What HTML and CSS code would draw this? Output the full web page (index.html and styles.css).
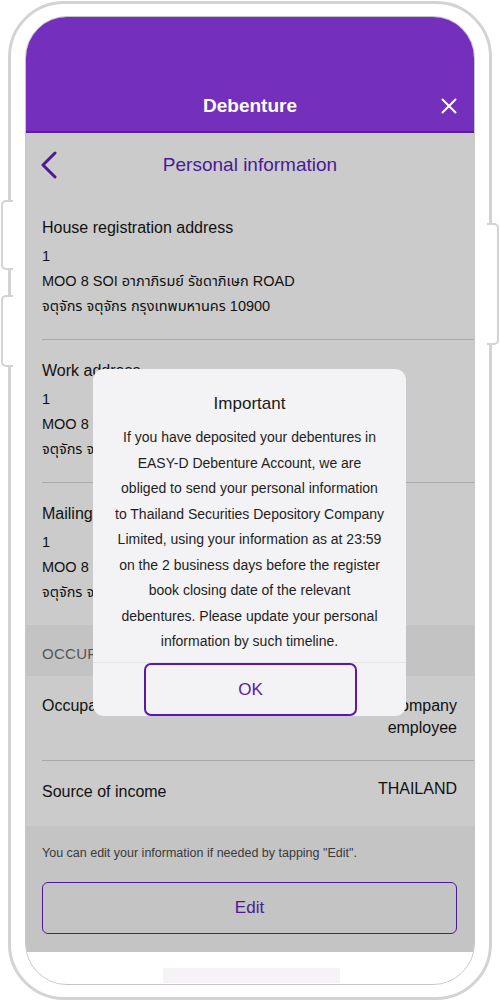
FILE: index.html
```html
<!DOCTYPE html>
<html lang="en">
<head>
<meta charset="utf-8">
<title>Debenture - Personal information</title>
<link rel="stylesheet" href="styles.css">
</head>
<body>
<div class="device">
  <span class="hw hw-left hw-l1"></span>
  <span class="hw hw-left hw-l2"></span>
  <span class="hw hw-right"></span>
  <div class="screen">
    <header class="appbar">
      <span class="appbar-title">Debenture</span>
      <svg class="close" width="16" height="16" viewBox="0 0 16 16"><path d="M1.5 1.5 L14.5 14.5 M14.5 1.5 L1.5 14.5" stroke="#fff" stroke-width="2" stroke-linecap="round"/></svg>
    </header>
    <div class="content">
      <div class="subbar">
        <svg class="back" width="18" height="28" viewBox="0 0 18 28"><path d="M15 2 L3 14 L15 26" fill="none" stroke="#4a1a98" stroke-width="3" stroke-linecap="round" stroke-linejoin="round"/></svg>
        <span class="subbar-title">Personal information</span>
      </div>

      <section class="addr">
        <div class="addr-title">House registration address</div>
        <div class="addr-line">1</div>
        <div class="addr-line">MOO 8 SOI อาภาภิรมย์ รัชดาภิเษก ROAD</div>
        <div class="addr-line">จตุจักร จตุจักร กรุงเทพมหานคร 10900</div>
      </section>
      <section class="addr">
        <div class="addr-title">Work address</div>
        <div class="addr-line">1</div>
        <div class="addr-line">MOO 8 SOI อาภาภิรมย์ รัชดาภิเษก ROAD</div>
        <div class="addr-line">จตุจักร จตุจักร กรุงเทพมหานคร 10900</div>
      </section>
      <section class="addr last">
        <div class="addr-title">Mailing address</div>
        <div class="addr-line">1</div>
        <div class="addr-line">MOO 8 SOI อาภาภิรมย์ รัชดาภิเษก ROAD</div>
        <div class="addr-line">จตุจักร จตุจักร กรุงเทพมหานคร 10900</div>
      </section>

      <div class="band">OCCUPATION</div>

      <div class="row">
        <span class="row-label">Occupation</span>
        <span class="row-value">Private company<br>employee</span>
      </div>
      <div class="row last src">
        <span class="row-label">Source of income</span>
        <span class="row-value">THAILAND</span>
      </div>

      <div class="footer">
        <p class="note">You can edit your information if needed by tapping "Edit".</p>
        <div class="btn-edit">Edit</div>
      </div>
      <div class="home-area"><span class="home-bar"></span></div>
    </div>

    <div class="dialog">
      <div class="dialog-title">Important</div>
      <p class="dialog-body">If you have deposited your debentures in<br>EASY-D Debenture Account, we are<br>obliged to send your personal information<br>to Thailand Securities Depository Company<br>Limited, using your information as at 23:59<br>on the 2 business days before the register<br>book closing date of the relevant<br>debentures. Please update your personal<br>information by such timeline.</p>
      <div class="dialog-actions">
        <div class="btn-ok">OK</div>
      </div>
    </div>
  </div>
</div>
</body>
</html>
```

FILE: styles.css
```css
* { box-sizing: border-box; }
html, body { margin: 0; padding: 0; background: #ffffff; }
body {
  width: 500px;
  height: 1004px;
  overflow: hidden;
  font-family: "Liberation Sans", Arial, "Noto Sans Thai", "Noto Sans", "DejaVu Sans", sans-serif;
  color: #111;
}

.device {
  position: relative;
  margin: 1px 8px 0;
  width: 484px;
  height: 999px;
  border: 3px solid #d3d3d3;
  border-radius: 56px;
  padding: 12px 14px;
  background: #fff;
}

.hw {
  position: absolute;
  background: #fff;
  border: 2px solid #d3d3d3;
  z-index: 2;
}
.hw-left { left: -10px; width: 12px; border-right: none; border-radius: 5px 0 0 5px; }
.hw-l1 { top: 196px; height: 70px; }
.hw-l2 { top: 291px; height: 72px; }
.hw-right { right: -10px; top: 219px; width: 12px; height: 122px; border-left: none; border-radius: 0 5px 5px 0; }

.screen {
  position: relative;
  width: 450px;
  height: 969px;
  border: 1px solid #c6c6c6;
  border-radius: 42px;
  overflow: hidden;
  display: flex;
  flex-direction: column;
  background: #fff;
}

.appbar {
  flex: 0 0 auto;
  height: 116px;
  background: #7430bc;
  border-bottom: 2px solid #5a1ea6;
  display: flex;
  align-items: flex-end;
  justify-content: center;
  padding-bottom: 13px;
  position: relative;
}
.appbar-title {
  color: #fff;
  font-size: 19px;
  font-weight: 700;
  line-height: 24px;
}
.close {
  position: absolute;
  right: 17px;
  bottom: 17px;
}

.content {
  flex: 1 1 auto;
  display: flex;
  flex-direction: column;
  background: #cbcbcb;
}

.subbar {
  position: relative;
  height: 64px;
  display: flex;
  align-items: center;
  justify-content: center;
}
.back {
  position: absolute;
  left: 14px;
  top: 18px;
}
.subbar-title {
  color: #4a1a98;
  font-size: 19px;
  line-height: 24px;
}

.addr {
  margin-left: 16px;
  padding: 18px 17px 20px 0;
  border-bottom: 1px solid #a9a9a9;
  font-size: 15.5px;
}
.addr.last { border-bottom: none; }
.addr-title { font-size: 16px; line-height: 26px; margin-bottom: 3px; }
.addr-line { font-size: 14.5px; line-height: 25px; }

.band {
  height: 51px;
  padding: 20px 16px 0;
  background: #c3c3c3;
  color: #555;
  font-size: 15px;
  line-height: 18px;
  letter-spacing: 0.3px;
}

.row {
  margin-left: 16px;
  padding: 19px 17px 21px 0;
  border-bottom: 1px solid #a9a9a9;
  display: flex;
  justify-content: space-between;
  align-items: flex-start;
  font-size: 16px;
  line-height: 22px;
}
.row.last { border-bottom: none; padding-top: 20px; padding-bottom: 23px; }
.row-value { text-align: right; }
.src .row-value { margin-top: -3px; }

.footer {
  background: #c4c4c4;
  padding: 19px 17px 18px 16px;
}
.note {
  margin: 0;
  font-size: 12.5px;
  line-height: 16px;
  color: #3a3a3a;
}
.btn-edit {
  margin-top: 21px;
  height: 52px;
  border: 1.5px solid #4a1a98;
  border-radius: 6px;
  display: flex;
  align-items: center;
  justify-content: center;
  color: #4a1a98;
  font-size: 17px;
}

.home-area {
  flex: 1 1 auto;
  background: #fff;
  display: flex;
  justify-content: center;
  padding-top: 16px;
}
.home-bar {
  width: 177px;
  height: 15px;
  background: #f5f3f5;
  margin-left: 2px;
}

.dialog {
  position: absolute;
  left: 67px;
  top: 352px;
  width: 313px;
  height: 347px;
  background: #f3f2f4;
  border-radius: 11px;
  display: flex;
  flex-direction: column;
  align-items: center;
  padding-top: 24px;
}
.dialog-title {
  font-size: 17px;
  line-height: 22px;
  color: #1a1a1a;
}
.dialog-body {
  margin: 10px 0 0;
  text-align: center;
  font-size: 14px;
  line-height: 25.5px;
  color: #1e1e1e;
}
.dialog-actions {
  margin-top: auto;
  width: 100%;
  height: 54px;
  border-top: 1px solid #e6e5e8;
  display: flex;
  justify-content: center;
}
.btn-ok {
  width: 213px;
  height: 53px;
  margin-left: 2px;
  border: 2px solid #5a18b0;
  border-radius: 7px;
  display: flex;
  align-items: center;
  justify-content: center;
  color: #5a18b0;
  font-size: 17px;
}
```
